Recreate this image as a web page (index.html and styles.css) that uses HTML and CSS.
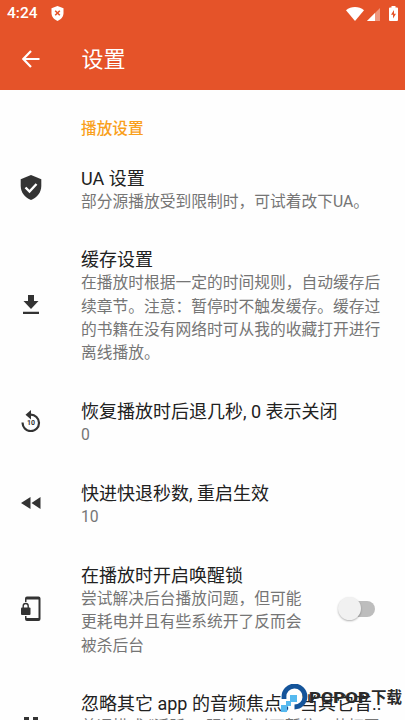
FILE: index.html
```
<!DOCTYPE html>
<html lang="zh-CN">
<head>
<meta charset="utf-8">
<title>设置</title>
<link rel="stylesheet" href="styles.css">
</head>
<body>
<div class="screen">
  <header class="header">
    <div class="status">
      <span class="clock">4:24</span>
      <svg class="status-shield" viewBox="0 0 13 15"><path fill="#fff" d="M6.5 0 12.5 2.3V7c0 3.5-2.300 6.500-6 8C2.800 13.500.5 10.500.5 7V2.300z"/><path d="m4.200 4.700 4.600 4.600m0-4.600L4.200 9.300" stroke="#e55329" stroke-width="1.600"/></svg>
      <span class="spacer"></span>
      <svg class="wifi" viewBox="0 0 18 14"><path fill="#fff" d="M0 3.300C5-1 13-1 18 3.300L9 14z"/></svg>
      <svg class="signal" viewBox="0 0 13 13"><path fill="#fff" opacity=".4" d="M13 0v13H0z"/><path fill="#fff" d="M8 5v8H0z"/></svg>
      <svg class="battery" viewBox="0 0 9 15"><path fill="#fff" d="M2.500 0h4v1.500H8q1 0 1 1V14q0 1-1 1H1q-1 0-1-1V2.500q0-1 1-1h1.500z"/><path fill="#e55329" d="M5 4 2 8.700h2V12.500L7 7.700H5z"/></svg>
    </div>
    <div class="toolbar">
      <svg class="back" viewBox="0 0 18 18"><path d="M17.500 9H1.500M9 1 1.300 9 9 17" fill="none" stroke="#fff" stroke-width="2.200"/></svg>
      <h1>设置</h1>
    </div>
  </header>
  <main>
    <h2>播放设置</h2>
    <section class="row ua">
      <div class="icon"><svg width="22" height="26" viewBox="0 0 22 26"><path fill="#333" d="M11 0 21.300 4.300V11c0 6.500-4.300 11.500-10.300 14C5 22.500.7 17.500.7 11V4.300z"/><path d="m5.500 12.500 4 4 7-7.500" fill="none" stroke="#fff" stroke-width="2.400"/></svg></div>
      <div class="text"><h3>UA 设置</h3><p>部分源播放受到限制时，可试着改下UA。</p></div>
    </section>
    <section class="row cache">
      <div class="icon"><svg width="16" height="19" viewBox="0 0 16 19"><path fill="#333" d="M5 0h6v6h4.500L8 14 .500 6H5zM0 16.800h16V19H0z"/></svg></div>
      <div class="text"><h3>缓存设置</h3><p>在播放时根据一定的时间规则，自动缓存后<br>续章节。注意：暂停时不触发缓存。缓存过<br>的书籍在没有网络时可从我的收藏打开进行<br>离线播放。</p></div>
    </section>
    <section class="row resume">
      <div class="icon"><svg width="20" height="22" viewBox="0 0 20 22"><path fill="none" stroke="#333" stroke-width="2.200" d="M1.600 12.500A8.200 8.200 0 1 0 9.500 4.700"/><path fill="#333" d="M10 0v9.500L4.500 4.800z"/><text x="10" y="15.300" text-anchor="middle">10</text></svg></div>
      <div class="text"><h3>恢复播放时后退几秒, 0 表示关闭</h3><p>0</p></div>
    </section>
    <section class="row seek">
      <div class="icon"><svg width="20" height="12" viewBox="0 0 20 12"><path fill="#333" d="M9.500 0v12L0 6zM19.500 0v12L10.500 6z"/></svg></div>
      <div class="text"><h3>快进快退秒数, 重启生效</h3><p>10</p></div>
    </section>
    <section class="row wake">
      <div class="icon"><svg width="20" height="26" viewBox="0 0 20 26"><path fill="#333" d="M4 6V2.500Q4 .500 6 .500H17.500q2 0 2 2V23q0 2-2 2H6Q4 25 4 23V20h1.500v2h12V3.500h-12V6z"/><path fill="#333" d="M1 11.500h7.500q1 0 1 1v5.500q0 1-1 1H1q-1 0-1-1v-5.500q0-1 1-1z"/><path fill="none" stroke="#333" stroke-width="1.400" d="M2.200 12V10a2.500 2.500 0 0 1 5 0v2"/></svg></div>
      <div class="text"><h3>在播放时开启唤醒锁</h3><p>尝试解决后台播放问题，但可能<br>更耗电并且有些系统开了反而会<br>被杀后台</p></div>
      <div class="switch"><span></span></div>
    </section>
    <section class="row focus">
      <div class="icon"><svg width="14" height="18" viewBox="0 0 14 18"><path fill="#333" d="M0 0h5v18H0zM9 0h5v18H9z"/></svg></div>
      <div class="text"><h3>忽略其它 app 的音频焦点，当其它音..</h3><p>普通模式 “活跃”，强迫或时可暂停，若打开</p></div>
    </section>
  </main>
  <div class="watermark">
    <svg width="28" height="30" viewBox="0 0 28 30"><path fill="none" stroke="#14549a" stroke-width="4.800" d="M3 15V13A10.500 10.500 0 1 1 13.500 23"/><path fill="#55b9ef" d="M9 11h7v7H9zM5 17h5v5H5zM0 21h6v7H0z"/></svg>
    <svg class="brand" width="62" height="20" viewBox="0 0 62 20"><text x="0" y="14.500" textLength="61" lengthAdjust="spacingAndGlyphs">PCPOP</text></svg>
    <span class="load">下载</span>
  </div>
</div>
</body>
</html>
```
FILE: styles.css
```
* { box-sizing: border-box; }
body { margin: 0; font-family: Roboto, "Noto Sans CJK SC", sans-serif; background: #fff; }
.screen { position: relative; width: 405px; height: 720px; overflow: hidden; background: #fefefe; }
.header { height: 90px; background: #e55329; color: #fff; }
.status { height: 27px; padding: 0 7px; display: flex; align-items: center; }
.clock { width: 31px; font-size: 15.500px; font-weight: 500; line-height: 29px; white-space: nowrap; }
.status-shield { width: 13px; height: 15px; margin-left: 13px; }
.spacer { flex: 1; }
.wifi { width: 18px; height: 14px; }
.signal { width: 13px; height: 13px; margin: 1px 9px 0 3px; }
.battery { width: 9px; height: 15px; }
.toolbar { height: 63px; display: flex; align-items: center; padding: 0 0 0 22px; }
.back { width: 18px; height: 18px; margin-right: 41.500px; }
h1, h2, h3, p { margin: 0; white-space: nowrap; }
h1 { font-size: 22px; line-height: 30px; font-weight: 400; padding-top: 2px; }
h2 { margin: 27px 0 0 81px; font-size: 15.700px; line-height: 24px; font-weight: 500; color: #f9a01b; }
.row { display: flex; }
.icon { width: 81px; padding: 0 19px 3px 0; display: flex; align-items: center; justify-content: center; flex: none; }
.icon svg { display: block; }
.icon text { font: 700 7px Roboto, sans-serif; fill: #333; }
.text { flex: 1; min-width: 0; }
h3 { height: 24px; font-size: 18px; line-height: 26px; font-weight: 400; color: #212121; }
p { font-size: 15.750px; line-height: 23.300px; color: #757575; }
.ua { margin-top: 25px; }
.cache { margin-top: 34px; }
.resume { margin-top: 35px; }
.resume .icon { padding-bottom: 5px; }
.seek { margin-top: 34px; }
.seek .icon { padding-bottom: 2px; }
.wake { margin-top: 35px; }
.focus { margin-top: 34px; }
.focus .icon { align-items: flex-start; padding-top: 26px; }
.switch { position: relative; width: 34px; height: 16px; align-self: center; margin: 0 30px 3px 0; border-radius: 8px; background: #bdbdbd; }
.switch span { position: absolute; left: -3px; top: -4px; width: 23px; height: 23px; border-radius: 50%; background: #f1f1f1; box-shadow: 0 1px 2px rgba(0,0,0,.3); }
.watermark { position: absolute; left: 281px; top: 684px; height: 30px; display: flex; align-items: center; color: #2b2b2b; }
.brand { margin-top: -2px; }
.brand text { font: 900 14px Roboto, sans-serif; fill: #2b2b2b; }
.load { font-size: 15.500px; font-weight: 700; line-height: 20px; margin-top: -2px; }
```
